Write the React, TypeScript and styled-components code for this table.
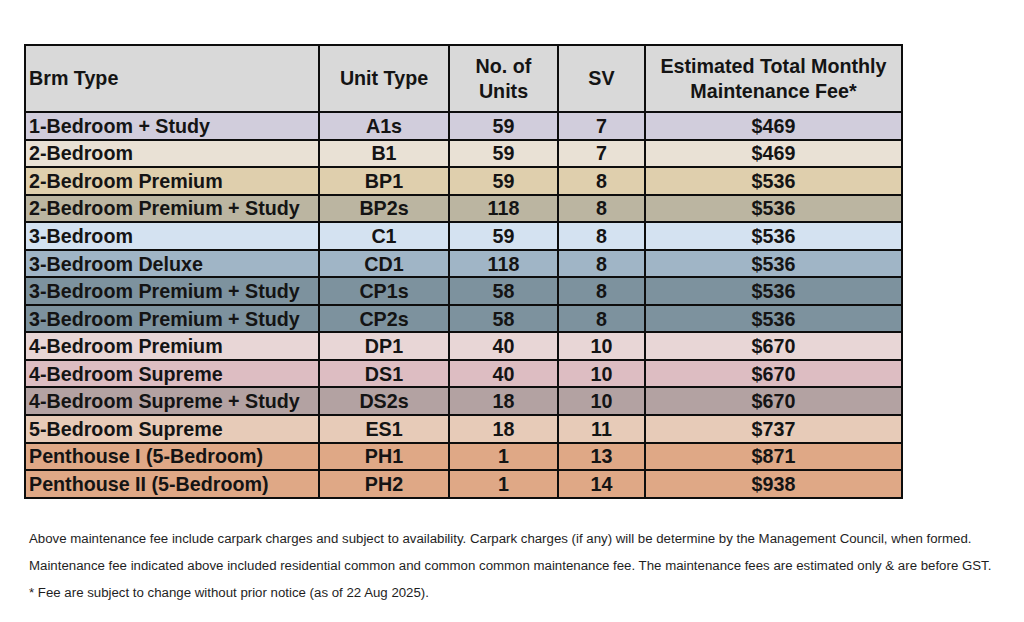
import styled, { createGlobalStyle } from "styled-components";

type Row = {
  brm: string;
  unit: string;
  count: number;
  sv: number;
  fee: string;
  color: string;
};

const rows: Row[] = [
  { brm: "1-Bedroom + Study", unit: "A1s", count: 59, sv: 7, fee: "$469", color: "#d1cddc" },
  { brm: "2-Bedroom", unit: "B1", count: 59, sv: 7, fee: "$469", color: "#e9e1d5" },
  { brm: "2-Bedroom Premium", unit: "BP1", count: 59, sv: 8, fee: "$536", color: "#dfcfad" },
  { brm: "2-Bedroom Premium + Study", unit: "BP2s", count: 118, sv: 8, fee: "$536", color: "#bbb5a1" },
  { brm: "3-Bedroom", unit: "C1", count: 59, sv: 8, fee: "$536", color: "#d4e2f1" },
  { brm: "3-Bedroom Deluxe", unit: "CD1", count: 118, sv: 8, fee: "$536", color: "#a0b5c6" },
  { brm: "3-Bedroom Premium + Study", unit: "CP1s", count: 58, sv: 8, fee: "$536", color: "#7d929e" },
  { brm: "3-Bedroom Premium + Study", unit: "CP2s", count: 58, sv: 8, fee: "$536", color: "#7d929e" },
  { brm: "4-Bedroom Premium", unit: "DP1", count: 40, sv: 10, fee: "$670", color: "#e8d6d6" },
  { brm: "4-Bedroom Supreme", unit: "DS1", count: 40, sv: 10, fee: "$670", color: "#ddbdc2" },
  { brm: "4-Bedroom Supreme + Study", unit: "DS2s", count: 18, sv: 10, fee: "$670", color: "#b3a2a2" },
  { brm: "5-Bedroom Supreme", unit: "ES1", count: 18, sv: 11, fee: "$737", color: "#e7cbb8" },
  { brm: "Penthouse I (5-Bedroom)", unit: "PH1", count: 1, sv: 13, fee: "$871", color: "#dfa886" },
  { brm: "Penthouse II (5-Bedroom)", unit: "PH2", count: 1, sv: 14, fee: "$938", color: "#dfa886" },
];

const notes = [
  "Above maintenance fee include carpark charges and subject to availability. Carpark charges (if any) will be determine by the Management Council, when formed.",
  "Maintenance fee indicated above included residential common and common common maintenance fee. The maintenance fees are estimated only & are before GST.",
  "* Fee are subject to change without prior notice (as of 22 Aug 2025).",
];

const App = () => {
  return (
    <Page>
      <GlobalStyle />
      <FeeTable>
        <colgroup>
          <col style={{ width: 294 }} />
          <col style={{ width: 130 }} />
          <col style={{ width: 109 }} />
          <col style={{ width: 87 }} />
          <col style={{ width: 257 }} />
        </colgroup>
        <thead>
          <HeadRow>
            <HeadCell $left>Brm Type</HeadCell>
            <HeadCell>Unit Type</HeadCell>
            <HeadCell>
              No. of
              <br />
              Units
            </HeadCell>
            <HeadCell>SV</HeadCell>
            <HeadCell>
              Estimated Total Monthly
              <br />
              Maintenance Fee*
            </HeadCell>
          </HeadRow>
        </thead>
        <tbody>
          {rows.map((row, index) => (
            <BodyRow key={index} $color={row.color}>
              <Cell $left>{row.brm}</Cell>
              <Cell>{row.unit}</Cell>
              <Cell>{row.count}</Cell>
              <Cell>{row.sv}</Cell>
              <Cell>{row.fee}</Cell>
            </BodyRow>
          ))}
        </tbody>
      </FeeTable>
      <Notes>
        {notes.map((note, index) => (
          <Note key={index}>{note}</Note>
        ))}
      </Notes>
    </Page>
  );
};

export default App;

/*
Styles
*/

const GlobalStyle = createGlobalStyle`
  html, body {
    margin: 0;
    padding: 0;
    background: #ffffff;
  }
`;

const Page = styled.div`
  width: 1024px;
  height: 622px;
  padding: 44px 0 0 24px;
  box-sizing: border-box;
  overflow: hidden;
`;

const FeeTable = styled.table`
  border-collapse: collapse;
  table-layout: fixed;
  width: 879px;
  border: 2px solid #0d0d0d;
  font-family: "Liberation Sans", Arial, sans-serif;
  font-weight: bold;
  font-size: 19.7px;
  color: #141414;
`;

const HeadRow = styled.tr`
  height: 67px;
  background: #d9d9d9;
`;

const HeadCell = styled.th<{ $left?: boolean }>`
  border: 2px solid #0d0d0d;
  padding: 0 3px;
  text-align: ${(p) => (p.$left ? "left" : "center")};
  vertical-align: middle;
  line-height: 25px;
  font-weight: bold;
`;

const BodyRow = styled.tr<{ $color: string }>`
  height: 27.55px;
  background: ${(p) => p.$color};
`;

const Cell = styled.td<{ $left?: boolean }>`
  border: 2px solid #0d0d0d;
  padding: 0 3px;
  text-align: ${(p) => (p.$left ? "left" : "center")};
  vertical-align: middle;
  line-height: 22px;
  white-space: nowrap;
`;

const Notes = styled.div`
  display: flex;
  flex-direction: column;
  gap: 10px;
  margin-top: 31px;
  padding-left: 5px;
`;

const Note = styled.div`
  font-family: "Liberation Sans", Arial, sans-serif;
  font-size: 13.25px;
  line-height: 17px;
  color: #1e1e1e;
  white-space: nowrap;
`;
